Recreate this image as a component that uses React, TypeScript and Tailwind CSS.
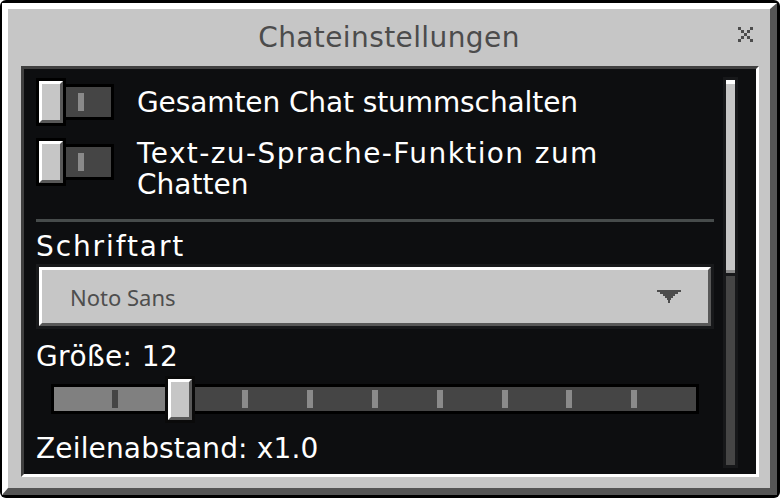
import React from "react";

const mc = "font-['DejaVu_Sans',sans-serif]";

function Toggle() {
  return (
    <div className="flex items-center shrink-0">
      <div className="w-[30px] h-[48px] border-[3px] border-black bg-black">
        <div className="w-full h-full bg-[#c6c6c6] border-[3px] border-t-white border-l-white border-b-[#585858] border-r-[#585858]" />
      </div>
      <div className="w-[48px] h-[36px] border-[3px] border-l-0 border-black bg-[#454545] flex items-center pl-[12px]">
        <div className="w-[6px] h-[18px] bg-[#8a8a8a]" />
      </div>
    </div>
  );
}

function Arrow() {
  return (
    <svg width="24" height="13" viewBox="0 0 24 13" shapeRendering="crispEdges">
      <path
        d="M0 0H24V2H21V4H18V6H16V8H14V10H13V13H11V10H10V8H8V6H6V4H3V2H0Z"
        fill="#4c4c4c"
      />
    </svg>
  );
}

function CloseX() {
  const cells = [
    [0, 0], [1, 1], [2, 2], [3, 3], [4, 4],
    [4, 0], [3, 1], [1, 3], [0, 4],
  ];
  return (
    <svg width="15" height="15" viewBox="0 0 15 15" shapeRendering="crispEdges">
      {cells.map(([x, y], i) => (
        <rect key={i} x={x * 3} y={y * 3} width="3" height="3" fill="#4c4c4c" />
      ))}
    </svg>
  );
}

function Slider() {
  const rest = [0, 1, 2, 3, 4, 5, 6];
  return (
    <div className="relative mt-[4px] h-[47px] ml-[15px] w-[648px] pt-[8px]">
      <div className="h-[30px] border-[3px] border-black bg-[#454545] flex">
        <div className="w-[111px] h-full bg-[#808080] flex items-center pl-[58px]">
          <div className="w-[6px] h-[18px] bg-[#454545]" />
        </div>
        <div className="flex-1 h-full flex items-center pl-[77px] gap-[58.9px]">
          {rest.map((i) => (
            <div key={i} className="w-[6px] h-[18px] bg-[#8a8a8a] shrink-0" />
          ))}
        </div>
      </div>
      <div className="absolute left-[114px] top-0 w-[30px] h-[47px] border-[3px] border-[#0a0a0a] bg-black">
        <div className="w-full h-full bg-[#c6c6c6] border-[3px] border-t-white border-l-white border-b-[#585858] border-r-[#585858]" />
      </div>
    </div>
  );
}

export default function App() {
  return (
    <div className={`w-[780px] h-[498px] bg-white ${mc}`}>
      <div className="w-full h-full bg-black pt-[3px] pl-[2px] pr-[3px] pb-[3px] rounded-[6px]">
        <div className="w-full h-full flex flex-col bg-[#c6c6c6] border-t-[6px] border-l-[6px] border-r-[7px] border-b-[7px] border-t-white border-l-white border-r-[#555555] border-b-[#555555]">
          <div className="h-[57px] shrink-0 grid grid-cols-[1fr_auto_1fr] items-center">
            <div />
            <span className="text-[28px] leading-[31px] text-[#4c4c4c] tracking-[0.4px]">
              Chateinstellungen
            </span>
            <div className="justify-self-end self-start mt-[18px] mr-[17px]">
              <CloseX />
            </div>
          </div>
          <div className="flex-1 ml-[13px] mr-[11px] mb-[11px] border-[3px] border-t-[#404040] border-l-[#404040] border-b-white border-r-white bg-[#0d0e10] flex">
            <div className="pl-[12px] pt-[9px] w-[690px] flex flex-col text-white">
              <div className="flex items-center h-[48px] gap-[23px]">
                <Toggle />
                <span className="text-[28px] leading-[31px] tracking-[-0.1px] whitespace-nowrap">
                  Gesamten Chat stummschalten
                </span>
              </div>
              <div className="flex items-start mt-[12px] gap-[23px]">
                <Toggle />
                <div className="flex flex-col text-[28px] leading-[31px] whitespace-nowrap">
                  <span className="tracking-[1.4px]">Text-zu-Sprache-Funktion zum</span>
                  <span>Chatten</span>
                </div>
              </div>
              <div className="mt-[19px] h-[3px] w-[678px] bg-[#464b4b]" />
              <span className="mt-[9px] text-[28px] leading-[31px] tracking-[1.9px]">Schriftart</span>
              <div className="mt-[2px] h-[65px] w-[678px] border-[3px] border-[#18191b]">
                <div className="h-full bg-[#c6c6c6] border-[3px] border-t-white border-l-white border-b-[#585858] border-r-[#585858] flex items-center justify-between pl-[28px] pr-[27px]">
                  <span className="font-['Noto_Sans',sans-serif] text-[22px] leading-[28px] text-[#4e4e4e]">
                    Noto Sans
                  </span>
                  <Arrow />
                </div>
              </div>
              <span className="mt-[12px] text-[28px] leading-[31px] tracking-[0.4px]">Größe: 12</span>
              <Slider />
              <span className="mt-[10px] text-[28px] leading-[31px] tracking-[0.15px]">
                Zeilenabstand: x1.0
              </span>
            </div>
            <div className="ml-[9px] mt-[8px] w-[15px] h-[391px] bg-[#17181a] p-[3px] flex flex-col shrink-0">
              <div className="h-[193px] bg-[#c6c6c6] border-t-[4px] border-t-white border-b-[3px] border-b-[#8b8b8b]" />
              <div className="mt-[3px] flex-1 bg-[#454545]" />
            </div>
          </div>
        </div>
      </div>
    </div>
  );
}
